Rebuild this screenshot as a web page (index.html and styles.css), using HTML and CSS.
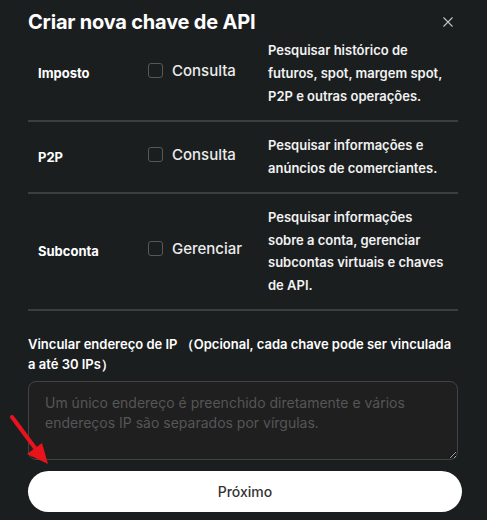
FILE: index.html
```html
<!DOCTYPE html>
<html lang="pt">
<head>
<meta charset="utf-8">
<title>Criar nova chave de API</title>
<link rel="stylesheet" href="styles.css">
</head>
<body>
<div class="modal">
  <header class="modal-header">
    <h1 class="modal-title">Criar nova chave de API</h1>
    <button class="close-btn" aria-label="Fechar">
      <svg width="10" height="10" viewBox="0 0 10 10"><path d="M0.5 0.5 L9.5 9.5 M9.5 0.5 L0.5 9.5" stroke="#c4c4c4" stroke-width="1.1" fill="none"/></svg>
    </button>
  </header>

  <div class="perm-table">
    <div class="perm-row first">
      <div class="perm-name">Imposto</div>
      <label class="perm-check"><span class="box"></span><span class="check-text">Consulta</span></label>
      <div class="perm-desc">Pesquisar histórico de futuros, spot, margem spot, P2P e outras operações.</div>
    </div>
    <div class="perm-row">
      <div class="perm-name">P2P</div>
      <label class="perm-check"><span class="box"></span><span class="check-text">Consulta</span></label>
      <div class="perm-desc">Pesquisar informações e anúncios de comerciantes.</div>
    </div>
    <div class="perm-row">
      <div class="perm-name">Subconta</div>
      <label class="perm-check"><span class="box"></span><span class="check-text">Gerenciar</span></label>
      <div class="perm-desc">Pesquisar informações sobre a conta, gerenciar subcontas virtuais e chaves de API.</div>
    </div>
  </div>

  <div class="ip-section">
    <p class="ip-label">Vincular endereço de IP （Opcional, cada chave pode ser vinculada a até 30 IPs）</p>
    <textarea class="ip-input" placeholder="Um único endereço é preenchido diretamente e vários endereços IP são separados por vírgulas."></textarea>
  </div>

  <button class="next-btn">Próximo</button>

  <svg class="pointer-arrow" width="60" height="60" viewBox="0 0 60 60">
    <line x1="12" y1="2" x2="38" y2="37" stroke="#e8131b" stroke-width="4" stroke-linecap="round"/>
    <polygon points="48,49 27,39 42,28" fill="#e8131b"/>
  </svg>
</div>
</body>
</html>
```

FILE: styles.css
```css
* { box-sizing: border-box; }

html, body {
  margin: 0;
  padding: 0;
  background: #1b1e1f;
}

body {
  font-family: Inter, "Noto Sans", "Liberation Sans", sans-serif;
  color: #ffffff;
  width: 487px;
  height: 520px;
  overflow: hidden;
}

.modal {
  position: relative;
  padding: 0 25px 0 28px;
}

.modal-header {
  display: flex;
  justify-content: space-between;
  align-items: flex-start;
  height: 39px;
  padding-top: 5px;
}

.modal-title {
  margin: 0;
  font-size: 20px;
  line-height: 34px;
  font-weight: 700;
  letter-spacing: -0.2px;
  color: #ffffff;
}

.close-btn {
  margin: 12px 9px 0 0;
  padding: 0;
  width: 10px;
  height: 10px;
  border: 0;
  background: transparent;
  display: flex;
}

.perm-table {
  margin-right: 4px;
}

.perm-row {
  display: grid;
  grid-template-columns: 110px 120px 1fr;
  align-items: center;
  padding: 12px 12px 12px 10px;
  border-bottom: 2px solid #3d3e40;
}

.perm-row.first {
  padding-top: 0;
  padding-bottom: 13px;
}

.perm-name {
  font-size: 13px;
  font-weight: 700;
  color: #ffffff;
}

.perm-check {
  display: flex;
  align-items: center;
  gap: 9px;
  margin-bottom: 6px;
}

.box {
  width: 15px;
  height: 15px;
  border: 1px solid #57585a;
  border-radius: 3px;
  background: #1b1e1f;
  flex: none;
}

.check-text {
  font-size: 15px;
  font-weight: 500;
  color: #ececec;
}

.perm-desc {
  font-size: 13px;
  line-height: 22.75px;
  font-weight: 600;
  color: #f2f2f2;
}

.ip-section {
  margin-top: 23px;
  margin-right: 4px;
}

.ip-label {
  margin: 0 0 7px 0;
  font-size: 13px;
  line-height: 20px;
  font-weight: 600;
  color: #ffffff;
}

.ip-input {
  display: block;
  width: 100%;
  height: 79px;
  padding: 11px 16px;
  border: 1px solid #434343;
  border-radius: 8px;
  background: #1f1f1f;
  font-family: Inter, "Noto Sans", "Liberation Sans", sans-serif;
  font-size: 14px;
  line-height: 20px;
  color: #dddddd;
  resize: vertical;
  outline: none;
}

.ip-input::placeholder {
  color: #555657;
}

.next-btn {
  display: block;
  width: 100%;
  height: 41px;
  margin-top: 11px;
  border: 0;
  border-radius: 21px;
  background: #ffffff;
  font-family: Inter, "Noto Sans", "Liberation Sans", sans-serif;
  font-size: 14px;
  font-weight: 500;
  color: #333333;
}

.pointer-arrow {
  position: absolute;
  left: 0;
  top: 415px;
}
```
